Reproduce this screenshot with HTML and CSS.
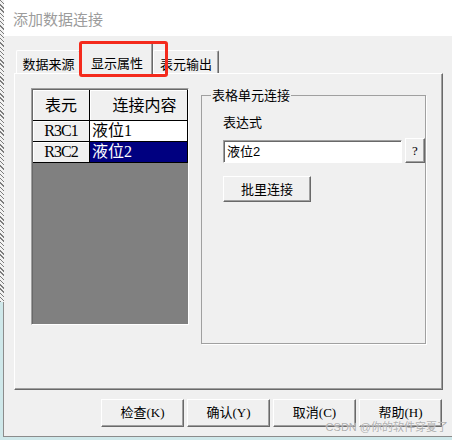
FILE: index.html
```html
<!DOCTYPE html>
<html lang="zh">
<head>
<meta charset="utf-8">
<title>添加数据连接</title>
<link rel="stylesheet" href="styles.css">
</head>
<body>
<div class="screen">
  <div class="edge">
    <div class="hatch"></div>
    <div class="edge-low"></div>
  </div>
  <div class="window">
    <div class="titlebar">添加数据连接</div>
    <div class="client">
      <div class="tabs">
        <div class="tab">数据来源</div>
        <div class="tab active">显示属性</div>
        <div class="tab">表元输出</div>
      </div>
      <div class="panel">
        <div class="grid-box">
          <div class="grid">
            <div class="cell fixed head">表元</div>
            <div class="cell fixed head wide">连接内容</div>
            <div class="cell fixed code">R3C1</div>
            <div class="cell value">液位1</div>
            <div class="cell fixed code">R3C2</div>
            <div class="cell value selected">液位2</div>
          </div>
        </div>
        <fieldset class="group">
          <legend>表格单元连接</legend>
          <div class="group-body">
            <div class="label">表达式</div>
            <div class="expr-row">
              <div class="input">液位2</div>
              <button class="btn small">?</button>
            </div>
            <button class="btn batch">批里连接</button>
          </div>
        </fieldset>
      </div>
      <div class="actions">
        <button class="btn action">检查(K)</button>
        <button class="btn action">确认(Y)</button>
        <button class="btn action">取消(C)</button>
        <button class="btn action">帮助(H)</button>
      </div>
    </div>
  </div>
</div>
<div class="annotation"></div>
<div class="watermark">CSDN @你的软件穿夏了</div>
</body>
</html>
```

FILE: styles.css
```css
* { box-sizing: border-box; }

html, body {
  margin: 0;
  padding: 0;
}

body {
  width: 452px;
  height: 440px;
  overflow: hidden;
  background: #cfe8ea;
  position: relative;
  font-family: "Liberation Serif", "Noto Sans CJK SC", serif;
  font-size: 13px;
  color: #000;
}

.screen {
  display: flex;
  height: 437px;
}

.edge {
  width: 4px;
  display: flex;
  flex-direction: column;
}

.hatch {
  height: 302px;
  background: repeating-linear-gradient(45deg, #7d7d7d 0 1px, #f2f2f2 1px 3px);
}

.edge-low {
  flex: 1;
  background: #cfe8ea;
  border-right: 1px solid #8c8c8c;
}

.window {
  flex: 1;
  display: flex;
  flex-direction: column;
  border-bottom: 1px solid #8c8c8c;
}

.titlebar {
  height: 36px;
  background: #fff;
  padding: 10px 0 0 9px;
  font-family: "Noto Sans CJK SC", sans-serif;
  font-size: 15px;
  line-height: 18px;
  color: #9c9c9c;
}

.client {
  flex: 1;
  background: #f0f0f0;
  display: flex;
  flex-direction: column;
}

/* tabs */
.tabs {
  display: flex;
  align-items: flex-end;
  height: 31px;
  margin-top: 6px;
  padding-left: 12px;
  position: relative;
  z-index: 1;
}

.tab {
  height: 23px;
  padding-top: 3px;
  display: flex;
  align-items: center;
  justify-content: center;
  background: #f0f0f0;
  border-top: 1px solid #fff;
  border-left: 1px solid #fff;
  border-right: 1px solid #696969;
  box-shadow: inset -1px 0 0 #a0a0a0;
  border-radius: 2px 2px 0 0;
  line-height: 14px;
  font-family: "Noto Sans CJK SC", sans-serif;
}

.tab:nth-child(1) { width: 65px; }
.tab:nth-child(2) { width: 72px; }
.tab:nth-child(3) { width: 66px; }

.tab.active {
  height: 32px;
  margin-bottom: -1px;
  padding-top: 8px;
}

/* panel */
.panel {
  margin-left: 10px;
  width: 429px;
  height: 317px;
  background: #f0f0f0;
  border: 1px solid;
  border-color: #fff #696969 #696969 #fff;
  box-shadow: inset -1px -1px 0 #a0a0a0;
  display: flex;
  align-items: flex-start;
  gap: 12px;
  padding: 14px 0 0 16px;
}

/* grid */
.grid-box {
  width: 158px;
  height: 237px;
  border: 1px solid;
  border-color: #a0a0a0 #fff #fff #a0a0a0;
  box-shadow: inset 1px 1px 0 #696969;
  background: #808080;
  padding: 1px 0 0 1px;
}

.grid {
  display: grid;
  grid-template-columns: 57px 98px;
  grid-template-rows: 31px 21px 21px;
}

.cell {
  border-right: 1px solid #000;
  border-bottom: 1px solid #000;
  font-size: 16px;
  line-height: 18px;
  display: flex;
  align-items: center;
  font-family: "Liberation Serif", "Noto Sans CJK SC", serif;
}

.cell.fixed {
  background: #f0f0f0;
  box-shadow: inset 1px 1px 0 #fff;
  justify-content: center;
}

.cell.head {
  padding-top: 2px;
}

.cell.head.wide {
  padding-left: 12px;
}

.cell.code {
  letter-spacing: -1px;
}

.cell.value {
  background: #fff;
  padding-left: 2px;
}

.cell.selected {
  background: #000080;
  color: #fff;
}

/* group box */
.group {
  margin: 0;
  padding: 0;
  min-inline-size: 0;
  width: 225px;
  height: 256px;
  border: 1px solid #a0a0a0;
  box-shadow: 1px 1px 0 #fff;
}

.group legend {
  margin-left: 9px;
  padding: 0 1px;
  font-family: "Noto Sans CJK SC", sans-serif;
  font-size: 13px;
  line-height: 14px;
}

.group-body {
  padding: 12px 0 0 21px;
  display: flex;
  flex-direction: column;
  align-items: flex-start;
}

.label {
  font-family: "Noto Sans CJK SC", sans-serif;
  line-height: 16px;
  height: 16px;
}

.expr-row {
  margin-top: 8px;
  display: flex;
  align-items: flex-end;
  gap: 3px;
}

.input {
  width: 179px;
  height: 23px;
  background: #fff;
  border: 1px solid;
  border-color: #a0a0a0 #fff #fff #a0a0a0;
  box-shadow: inset 1px 1px 0 #696969;
  padding: 3px 0 0 3px;
  line-height: 16px;
  font-family: "Liberation Sans", "Noto Sans CJK SC", sans-serif;
}

/* buttons */
.btn {
  margin: 0;
  padding: 0;
  font: inherit;
  color: #000;
  background: #f0f0f0;
  border: 1px solid;
  border-color: #fff #696969 #696969 #fff;
  box-shadow: inset -1px -1px 0 #a0a0a0;
  display: flex;
  align-items: center;
  justify-content: center;
  line-height: 16px;
}

.btn.small {
  width: 20px;
  height: 25px;
}

.btn.batch {
  margin-top: 13px;
  width: 88px;
  height: 26px;
  font-family: "Noto Sans CJK SC", sans-serif;
}

.actions {
  margin-top: 9px;
  display: flex;
  justify-content: flex-end;
  gap: 3px;
  padding-right: 10px;
}

.btn.action {
  width: 83px;
  height: 28px;
}

/* overlays */
.annotation {
  position: absolute;
  z-index: 5;
  left: 79px;
  top: 41px;
  width: 89px;
  height: 36px;
  border: 3px solid #f42a1c;
  border-radius: 3px;
}

.watermark {
  position: absolute;
  z-index: 5;
  right: 4px;
  top: 420px;
  font-family: "Liberation Sans", "Noto Sans CJK SC", sans-serif;
  font-size: 11px;
  line-height: 14px;
  color: rgba(160, 160, 160, 0.85);
  text-shadow: 0 0 1px #fff;
}
```
